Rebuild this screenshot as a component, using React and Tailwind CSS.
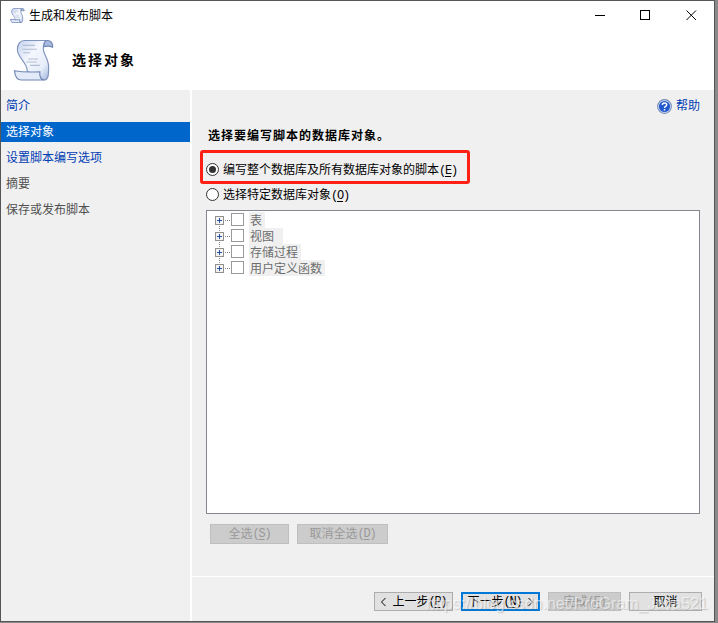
import React from 'react';

function Scroll({ size, id, line = 1.2 }) {
  return (
    <svg width={size} height={size} viewBox="0 0 42 43" className="block shrink-0">
      <defs>
        <linearGradient id={id} x1="0" y1="0" x2="1" y2="1">
          <stop offset="0" stopColor="#c3d2ee" />
          <stop offset="0.4" stopColor="#f4f7fe" />
          <stop offset="0.75" stopColor="#e6edfa" />
          <stop offset="1" stopColor="#9fb3da" />
        </linearGradient>
      </defs>
      <path
        d="M11 1.500H35C31 2.500 30.500 6 30.500 10C30.500 16 36 20 36 29C36 36 36 42 31 42L14 33C15 25 4 19 4 11C4 5 7 1.500 11 1.500Z"
        fill={`url(#${id})`}
        stroke="#8194bd"
        strokeWidth={line}
      />
      <path d="M31 8C31 4 32 1.500 35 1.500C38.500 1.500 40.500 5 40 8.500C37 7 34 7 31 8Z" fill="#a9bbdf" stroke="#7086b5" strokeWidth={line} />
      <path d="M1 32.500C9 34 18 34 27 33.500C26.500 38 28 41.500 31.500 42H8C4 42 1.500 38 1 32.500Z" fill="#e3ebf9" stroke="#7086b5" strokeWidth={line} />
      <path d="M9.500 6.500H22M9 10.500H24M10 14H17M15 20.500H25M13 23.500H24M17 27H27" stroke="#b3bdd2" strokeWidth="1.1" />
    </svg>
  );
}

const mono = "font-['Liberation_Mono',monospace] text-[12px] tracking-[-1.2px]";

function Key({ children }) {
  return (
    <span className={mono}>
      (<span className="underline underline-offset-2">{children}</span>)
    </span>
  );
}

function Radio({ checked }) {
  return (
    <span className="flex size-[13px] shrink-0 items-center justify-center rounded-full border border-[#333] bg-white">
      {checked && <span className="size-[7px] rounded-full bg-[#333]" />}
    </span>
  );
}

function NavItem({ children, tone }) {
  return <div className={`mb-[6px] h-5 pl-[5px] leading-[21px] ${tone}`}>{children}</div>;
}

function TreeRow({ label, width, first, last }) {
  return (
    <div className="flex h-4 items-center">
      <svg width="16" height="16" viewBox="0 0 16 16" className="shrink-0" shapeRendering="crispEdges">
        <rect x="0.5" y="4.500" width="8" height="8" fill="#f3f3f3" stroke="#919191" />
        <path d="M2 8.500H7M4.500 6V11" stroke="#2a4f9f" />
        <path d="M10 8.500H16" stroke="#888" strokeDasharray="1 1" />
        {!last && <path d="M4.500 14V16" stroke="#888" strokeDasharray="1 1" />}
        {!first && <path d="M4.500 0V4" stroke="#888" strokeDasharray="1 1" />}
      </svg>
      <span className="mb-[1px] size-[13px] shrink-0 border border-[#999] bg-white" />
      <span className={`ml-[5px] h-4 bg-[#f0f0f0] pl-[1px] leading-[18px] whitespace-nowrap text-[#6d6d6d] ${width}`}>{label}</span>
    </div>
  );
}

function Button({ children, className }) {
  return (
    <button className={`flex shrink-0 items-center justify-center border whitespace-pre ${className}`}>
      {children}
    </button>
  );
}

const disabled = 'border-[#bfbfbf] bg-[#cccccc] text-[#999]';
const enabled = 'border-[#adadad] bg-[#e1e1e1] text-black';

function Chevron({ flip }) {
  return (
    <svg width="12" height="12" viewBox="0 0 12 12" fill="none" stroke="#000" className="shrink-0">
      <path d={flip ? 'M6.500 2L10.500 6L6.500 10' : 'M5.500 2L1.500 6L5.500 10'} />
    </svg>
  );
}

export default function App() {
  return (
    <div className="relative h-[623px] w-[718px] overflow-hidden bg-[#8a8a8a] font-['Liberation_Sans','Noto_Sans_CJK_SC',sans-serif] text-[12px] text-black">
      <div className="flex h-[622px] w-[715px] flex-col border border-[#555] bg-white">
        <header className="h-[89px] shrink-0">
          <div className="flex h-[29px] items-center">
            <div className="ml-[9px]"><Scroll size={15} id="scrollSmall" line={2.4} /></div>
            <span className="mt-[1px] ml-[4px]">生成和发布脚本</span>
            <div className="mr-[17px] ml-auto flex gap-[35px]">
              <svg width="11" height="11" viewBox="0 0 11 11" fill="none" stroke="#000" shapeRendering="crispEdges">
                <path d="M1 5.500H11" />
              </svg>
              <svg width="11" height="11" viewBox="0 0 11 11" fill="none" stroke="#000" shapeRendering="crispEdges">
                <rect x="0.5" y="0.5" width="9" height="9" />
              </svg>
              <svg width="11" height="11" viewBox="0 0 11 11" fill="none" stroke="#000">
                <path d="M0.500 0.500L10 10M10 0.500L0.500 10" />
              </svg>
            </div>
          </div>
          <div className="flex h-[60px] items-center">
            <div className="ml-[12px]"><Scroll size={42} id="scrollLarge" /></div>
            <h1 className="ml-[17px] text-[14px] font-bold tracking-[2px]">选择对象</h1>
          </div>
        </header>
        <div className="flex min-h-0 flex-1 gap-[2px]">
          <nav className="w-[189px] shrink-0 bg-[#f0f0f0] pt-[6px]">
            <NavItem tone="text-[#003cb4]">简介</NavItem>
            <NavItem tone="bg-[#0066cc] text-white">选择对象</NavItem>
            <NavItem tone="text-[#003cb4]">设置脚本编写选项</NavItem>
            <NavItem tone="text-[#505050]">摘要</NavItem>
            <NavItem tone="text-[#505050]">保存或发布脚本</NavItem>
          </nav>
          <main className="flex flex-1 flex-col bg-[#f0f0f0]">
            <div className="mt-[6px] mr-[14px] flex h-5 items-center justify-end gap-[4px] text-[#003cb4]">
              <svg width="15" height="15" viewBox="0 0 14 14">
                <circle cx="7" cy="7" r="6.400" fill="#dfe9fa" stroke="#7088b8" />
                <circle cx="7" cy="7" r="5.200" fill="#2258cf" />
                <path d="M5 5.500C5 3.200 9 3.200 9 5.400C9 6.900 7 6.800 7 8.300M7 9.400V10.700" fill="none" stroke="#fff" strokeWidth="1.400" />
              </svg>
              <span>帮助</span>
            </div>
            <h2 className="mt-[9px] ml-[16px] h-5 leading-[22px] font-bold tracking-[1px]">选择要编写脚本的数据库对象。</h2>
            <div className="mt-[5px] ml-[8px] flex h-[34px] w-[270px] items-center rounded-[3px] border-[3px] border-[#ff2015] pt-[4px] pl-[3px]">
              <Radio checked />
              <span className="mt-[2px] ml-[4px] leading-5 whitespace-nowrap">编写整个数据库及所有数据库对象的脚本<Key>E</Key></span>
            </div>
            <div className="ml-[14px] flex h-5 items-center">
              <Radio />
              <span className="mt-[2px] ml-[4px] leading-5">选择特定数据库对象<Key>O</Key></span>
            </div>
            <div className="mt-[6px] ml-[14px] h-[304px] w-[494px] border border-[#828790] bg-white pt-[1px] pl-[8px]">
              <TreeRow label="表" width="w-[16px]" first />
              <TreeRow label="视图" width="w-[34px]" />
              <TreeRow label="存储过程" width="w-[52px]" />
              <TreeRow label="用户定义函数" width="w-[76px]" last />
            </div>
            <div className="mt-[10px] ml-[18px] flex gap-[8px]">
              <Button className={`h-5 w-[79px] ${disabled}`}>全选<Key>S</Key></Button>
              <Button className={`h-5 w-[91px] ${disabled}`}>取消全选<Key>D</Key></Button>
            </div>
            <footer className="mt-[32px] flex flex-1 border-t border-white pt-[15px] pl-[182px]">
              <Button className={`h-[19px] w-[79px] ${enabled}`}>
                <Chevron />上一步<Key>P</Key>
              </Button>
              <Button className="ml-[8px] h-[19px] w-[79px] border-2 border-[#0078d7] bg-[#e1e1e1] text-black">
                下一步<Key>N</Key><Chevron flip />
              </Button>
              <Button className={`ml-[8px] h-[19px] w-[73px] ${disabled}`}>完成<Key>F</Key></Button>
              <Button className={`ml-[8px] h-[19px] w-[73px] ${enabled}`}>取消</Button>
            </footer>
          </main>
        </div>
      </div>
      <div className="pointer-events-none absolute top-[595px] left-[426px] text-[16px] leading-[18px] whitespace-nowrap text-white/55 [text-shadow:1px_1px_1px_rgba(120,120,120,0.35)]">
        https://blog.csdn.net/ProGram_Java521
      </div>
    </div>
  );
}
